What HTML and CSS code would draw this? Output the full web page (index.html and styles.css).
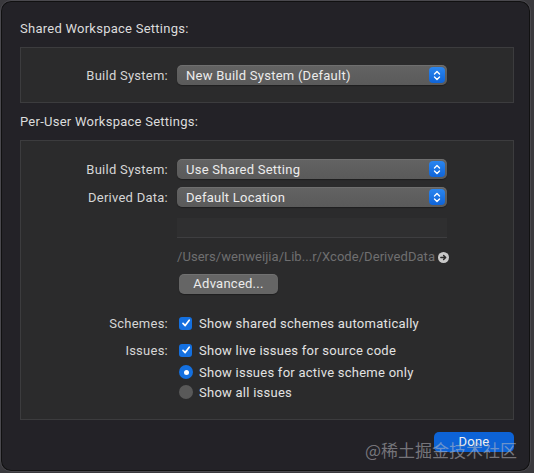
FILE: index.html
```html
<!DOCTYPE html>
<html>
<head>
<meta charset="utf-8">
<link rel="stylesheet" href="styles.css">
</head>
<body>
<div class="window">
  <div class="section-title">Shared Workspace Settings:</div>
  <div class="group group-shared">
    <div class="row">
      <div class="label">Build System:</div>
      <div class="popup"><span>New Build System (Default)</span><span class="stepper"><svg width="8" height="11" viewBox="0 0 8 11"><path d="M1.5 4 L4 1.5 L6.5 4 M1.5 7 L4 9.5 L6.5 7" fill="none" stroke="#fff" stroke-width="1.4" stroke-linecap="round" stroke-linejoin="round"/></svg></span></div>
    </div>
  </div>

  <div class="section-title second">Per-User Workspace Settings:</div>
  <div class="group group-user">
    <div class="row">
      <div class="label">Build System:</div>
      <div class="popup"><span>Use Shared Setting</span><span class="stepper"><svg width="8" height="11" viewBox="0 0 8 11"><path d="M1.5 4 L4 1.5 L6.5 4 M1.5 7 L4 9.5 L6.5 7" fill="none" stroke="#fff" stroke-width="1.4" stroke-linecap="round" stroke-linejoin="round"/></svg></span></div>
    </div>
    <div class="row gap8">
      <div class="label">Derived Data:</div>
      <div class="popup"><span>Default Location</span><span class="stepper"><svg width="8" height="11" viewBox="0 0 8 11"><path d="M1.5 4 L4 1.5 L6.5 4 M1.5 7 L4 9.5 L6.5 7" fill="none" stroke="#fff" stroke-width="1.4" stroke-linecap="round" stroke-linejoin="round"/></svg></span></div>
    </div>
    <div class="row field-row">
      <div class="label"></div>
      <div class="textfield"></div>
    </div>
    <div class="row path-row">
      <div class="label"></div>
      <div class="path"><span>/Users/wenweijia/Lib...r/Xcode/DerivedData</span><svg class="go" width="11" height="11" viewBox="0 0 11 11"><circle cx="5.5" cy="5.5" r="5.5" fill="#c9c9c9"/><path d="M2.8 5.5 H7.6 M5.6 3.4 L7.7 5.5 L5.6 7.6" fill="none" stroke="#2b2b2b" stroke-width="1.4" stroke-linecap="round" stroke-linejoin="round"/></svg></div>
    </div>
    <div class="row adv-row">
      <div class="label"></div>
      <div class="button">Advanced...</div>
    </div>
    <div class="row check-row first-check">
      <div class="label">Schemes:</div>
      <div class="option"><span class="checkbox"><svg width="10" height="10" viewBox="0 0 10 10"><path d="M2 5.3 L4.2 7.6 L8.2 2.2" fill="none" stroke="#fff" stroke-width="1.7" stroke-linecap="round" stroke-linejoin="round"/></svg></span>Show shared schemes automatically</div>
    </div>
    <div class="row check-row second-check">
      <div class="label">Issues:</div>
      <div class="option"><span class="checkbox"><svg width="10" height="10" viewBox="0 0 10 10"><path d="M2 5.3 L4.2 7.6 L8.2 2.2" fill="none" stroke="#fff" stroke-width="1.7" stroke-linecap="round" stroke-linejoin="round"/></svg></span>Show live issues for source code</div>
    </div>
    <div class="row radio-row">
      <div class="label"></div>
      <div class="option"><span class="radio on"></span>Show issues for active scheme only</div>
    </div>
    <div class="row radio-row last">
      <div class="label"></div>
      <div class="option"><span class="radio"></span>Show all issues</div>
    </div>
  </div>

  <div class="footer">
    <div class="done">Done</div>
    <div class="watermark">@稀土掘金技术社区</div>
  </div>
</div>
</body>
</html>
```

FILE: styles.css
```css
* { box-sizing: border-box; }
html, body { margin: 0; padding: 0; }
body {
  width: 534px;
  height: 473px;
  background: #3a393d;
  font-family: Roboto, "Noto Sans", sans-serif;
  font-size: 13px;
  letter-spacing: 0.25px;
  color: #dedede;
  overflow: hidden;
}
.window {
  width: 531px;
  height: 472px;
  background: #232227;
  border: 1px solid #4a494e;
  border-radius: 11px;
  box-shadow: inset 0 0 0 1px #111;
  padding: 19px 16px 0 19px;
  display: flex;
  flex-direction: column;
}
.section-title {
  height: 17px;
  line-height: 17px;
  color: #dcdcdc;
}
.section-title.second { margin-top: 10px; }
.group {
  background: #2b2b2c;
  border: 1px solid #3c3c3e;
  margin-top: 10px;
  width: 494px;
}
.group-shared { height: 56px; padding-top: 17px; }
.group-user { height: 280px; padding-top: 18px; }
.row {
  display: grid;
  grid-template-columns: 147px 270px;
  column-gap: 9px;
  align-items: center;
}
.gap8 { margin-top: 8px; }
.label {
  text-align: right;
  color: #d6d6d6;
}
.popup {
  height: 20px;
  border-radius: 5px;
  background: linear-gradient(#636363, #5a5a5a);
  box-shadow: inset 0 1px 0 rgba(255,255,255,0.08), 0 1px 1px rgba(0,0,0,0.3);
  display: flex;
  align-items: center;
  justify-content: space-between;
  padding: 0 2px 0 9px;
  color: #ececec;
}
.stepper {
  width: 16px;
  height: 16px;
  border-radius: 4px;
  background: linear-gradient(#2a86f0, #0f64d8);
  display: flex;
  align-items: center;
  justify-content: center;
}
.field-row { margin-top: 11px; }
.textfield {
  height: 20px;
  background: #2f2f30;
  border-bottom: 1px solid #3e3e40;
}
.path-row { margin-top: 10px; height: 17px; }
.path {
  display: flex;
  align-items: center;
  color: #6f6f70;
  white-space: nowrap;
  letter-spacing: 0.05px;
}
.path .go { margin-left: 3px; margin-top: 2px; flex: none; }
.adv-row { margin-top: 9px; }
.button {
  width: 99px;
  height: 20px;
  margin-left: 2px;
  border-radius: 5px;
  background: #656565;
  box-shadow: inset 0 1px 0 rgba(255,255,255,0.08), 0 1px 1px rgba(0,0,0,0.3);
  color: #ececec;
  text-align: center;
  line-height: 20px;
}
.check-row, .radio-row { height: 20px; }
.first-check { margin-top: 19px; }
.second-check { margin-top: 7px; }
.radio-row { margin-top: 2px; }
.radio-row.last { margin-top: 0; }
.option {
  display: flex;
  align-items: center;
  color: #e2e2e2;
  white-space: nowrap;
}
.checkbox {
  width: 13px;
  height: 13px;
  margin-left: 2px;
  margin-right: 7px;
  border-radius: 3px;
  background: #1470e0;
  display: flex;
  align-items: center;
  justify-content: center;
  flex: none;
}
.radio {
  width: 14px;
  height: 14px;
  margin-left: 2px;
  margin-right: 6px;
  border-radius: 50%;
  background: #595959;
  flex: none;
  display: flex;
  align-items: center;
  justify-content: center;
}
.radio.on { background: #1470e0; }
.radio.on::after {
  content: "";
  width: 5px;
  height: 5px;
  border-radius: 50%;
  background: #fff;
}
.footer {
  position: relative;
  display: flex;
  justify-content: flex-end;
  margin-top: 12px;
  width: 494px;
}
.done {
  width: 80px;
  height: 20px;
  border-radius: 5px;
  background: #0d63d6;
  color: #f2f2f2;
  text-align: center;
  line-height: 19px;
}
.watermark {
  position: absolute;
  right: -3px;
  top: 5px;
  font-family: "Noto Sans CJK SC", sans-serif;
  font-size: 17px;
  line-height: 25px;
  color: rgba(190,190,195,0.55);
  letter-spacing: 0;
  pointer-events: none;
}
```
